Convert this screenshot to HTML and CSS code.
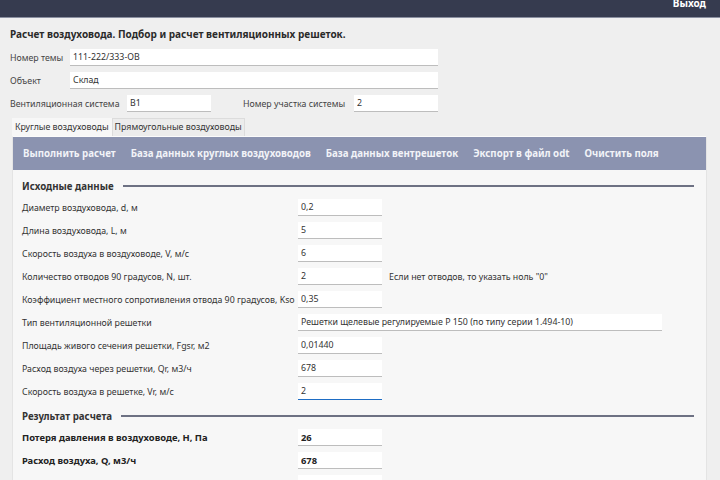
FILE: index.html
```html
<!DOCTYPE html>
<html>
<head>
  <title>Расчет воздуховода</title>
  <link rel="stylesheet" href="styles.css">
</head>
<body>
  <div class="topbar">
    <a href="#" class="exit-link">Выход</a>
  </div>
  <div class="page">
    <h1 class="page-title">Расчет воздуховода. Подбор и расчет вентиляционных решеток.</h1>
    <div class="meta-row">
      <label class="meta-label short">Номер темы</label>
      <input type="text" class="text-input meta-wide" value="111-222/333-ОВ">
    </div>
    <div class="meta-row">
      <label class="meta-label short">Объект</label>
      <input type="text" class="text-input meta-wide" value="Склад">
    </div>
    <div class="meta-row">
      <label class="meta-label system">Вентиляционная система</label>
      <input type="text" class="text-input small" value="В1">
      <label class="meta-label part">Номер участка системы</label>
      <input type="text" class="text-input small" value="2">
    </div>

    <div class="tabs">
      <div class="tab active">Круглые воздуховоды</div>
      <div class="tab">Прямоугольные воздуховоды</div>
    </div>

    <div class="panel">
      <div class="toolbar">
        <a href="#" class="toolbar-link">Выполнить расчет</a>
        <a href="#" class="toolbar-link">База данных круглых воздуховодов</a>
        <a href="#" class="toolbar-link">База данных вентрешеток</a>
        <a href="#" class="toolbar-link">Экспорт в файл odt</a>
        <a href="#" class="toolbar-link">Очистить поля</a>
      </div>

      <div class="section-title">
        <span>Исходные данные</span>
        <div class="section-line"></div>
      </div>
      <div class="field">
        <label class="field-label">Диаметр воздуховода, d, м</label>
        <input type="text" class="text-input small" value="0,2">
      </div>
      <div class="field">
        <label class="field-label">Длина воздуховода, L, м</label>
        <input type="text" class="text-input small" value="5">
      </div>
      <div class="field">
        <label class="field-label">Скорость воздуха в воздуховоде, V, м/с</label>
        <input type="text" class="text-input small" value="6">
      </div>
      <div class="field">
        <label class="field-label">Количество отводов 90 градусов, N, шт.</label>
        <input type="text" class="text-input small" value="2">
        <span class="field-note">Если нет отводов, то указать ноль "0"</span>
      </div>
      <div class="field">
        <label class="field-label">Коэффициент местного сопротивления отвода 90 градусов, Kso</label>
        <input type="text" class="text-input small" value="0,35">
      </div>
      <div class="field">
        <label class="field-label">Тип вентиляционной решетки</label>
        <input type="text" class="text-input grille" value="Решетки щелевые регулируемые Р 150 (по типу серии 1.494-10)">
      </div>
      <div class="field">
        <label class="field-label">Площадь живого сечения решетки, Fgsr, м2</label>
        <input type="text" class="text-input small" value="0,01440">
      </div>
      <div class="field">
        <label class="field-label">Расход воздуха через решетки, Qr, м3/ч</label>
        <input type="text" class="text-input small" value="678">
      </div>
      <div class="field">
        <label class="field-label">Скорость воздуха в решетке, Vr, м/с</label>
        <input type="text" class="text-input small focused" value="2">
      </div>

      <div class="section-title result">
        <span>Результат расчета</span>
        <div class="section-line"></div>
      </div>
      <div class="field bold">
        <label class="field-label">Потеря давления в воздуховоде, H, Па</label>
        <input type="text" class="text-input small" value="26">
      </div>
      <div class="field bold">
        <label class="field-label">Расход воздуха, Q, м3/ч</label>
        <input type="text" class="text-input small" value="678">
      </div>
      <div class="field bold">
        <label class="field-label">&nbsp;</label>
        <input type="text" class="text-input small" value="">
      </div>
    </div>
  </div>
</body>
</html>
```

FILE: styles.css
```css
html, body {
  height: 100%;
}

body {
  font-family: "Noto Sans", "Open Sans", sans-serif;
  font-size: 8.8px;
  color: #333;
  background-color: #efefef;
  margin: 0;
  padding: 0;
  overflow: hidden;
}

.topbar {
  height: 17px;
  background-color: #363b4f;
  border-bottom: 1px solid #8a8fa0;
  display: flex;
  justify-content: flex-end;
  align-items: flex-start;
  padding-right: 14px;
  overflow: hidden;
}

.exit-link {
  color: #fff;
  font-weight: bold;
  font-size: 10px;
  line-height: 11px;
  text-decoration: none;
  margin-top: -2px;
}

.page {
  padding: 0 13px 0 10px;
}

.page-title {
  margin: 10px 0 9px;
  font-size: 10px;
  line-height: 12px;
  color: #2a2a2a;
  white-space: nowrap;
}

.meta-row {
  display: flex;
  align-items: center;
  height: 17px;
  margin-bottom: 6px;
  white-space: nowrap;
}

.meta-label {
  color: #444;
  flex-shrink: 0;
}

.meta-label.short {
  width: 60px;
}

.meta-label.system {
  width: 117px;
}

.meta-label.part {
  margin-left: 32px;
  width: 111px;
}

.text-input {
  height: 17px;
  box-sizing: border-box;
  flex-shrink: 0;
  border: none;
  border-bottom: 1px solid #bdbdbd;
  background: #fff;
  padding: 0 3px;
  font-family: "Noto Sans", "Open Sans", sans-serif;
  font-size: 8.8px;
  color: #333;
  outline: none;
}

.text-input.meta-wide {
  width: 368px;
}

.text-input.small {
  width: 84px;
}

.text-input.grille {
  width: 364px;
}

.text-input.focused {
  border-bottom: 1px solid #1e6dc4;
}

.tabs {
  display: flex;
  margin: 3px 0 0 2px;
  white-space: nowrap;
}

.tab {
  height: 17px;
  line-height: 17px;
  padding: 0 2px;
  border: 1px solid #dcdcdc;
  border-bottom: none;
  background-color: #ececec;
  color: #333;
}

.tab.active {
  background-color: #f7f7f7;
  border-color: #f7f7f7;
}

.panel {
  margin-left: 2px;
  background-color: #f7f7f7;
  border: 1px solid #e4e4e4;
  border-top: 1px solid #fbfbfb;
  height: 400px;
}

.toolbar {
  height: 33px;
  background-color: #8b93b0;
  display: flex;
  align-items: center;
  gap: 15px;
  padding-left: 10px;
  white-space: nowrap;
}

.toolbar-link {
  color: #f2f3f8;
  font-weight: bold;
  font-size: 9.7px;
  text-decoration: none;
}

.section-title {
  display: flex;
  align-items: center;
  margin: 9px 12px 6px 9px;
  font-weight: bold;
  font-size: 9.7px;
  color: #333;
  height: 14px;
  white-space: nowrap;
}

.section-title.result {
  margin-top: 9px;
}

.section-line {
  flex: 1;
  height: 2px;
  background-color: #6d7183;
  margin-left: 9px;
}

.field {
  display: flex;
  align-items: center;
  height: 17px;
  margin: 0 0 6px 9px;
  white-space: nowrap;
}

.field-label {
  width: 276px;
  flex-shrink: 0;
  color: #333;
}

.field-note {
  margin-left: 7px;
}

.field.bold .field-label,
.field.bold .text-input {
  font-weight: bold;
  font-size: 9.4px;
  color: #222;
}
```
